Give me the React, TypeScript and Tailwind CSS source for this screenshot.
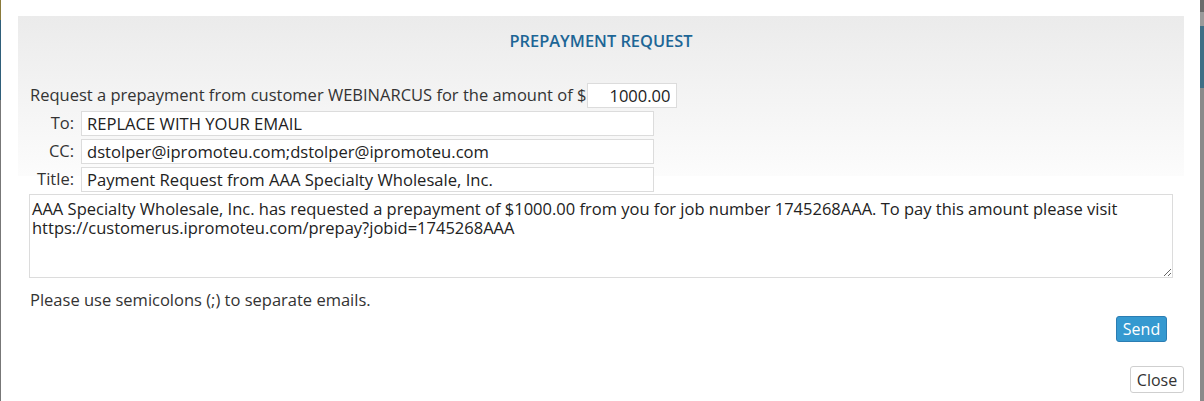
import React from "react";

const font = { fontFamily: '"Open Sans", "Liberation Sans", sans-serif' };

function Field({ label, value }: { label: string; value: string }) {
  return (
    <div className="flex items-center h-[25px]">
      <span className="w-[46px] text-right pr-[1px]">{label}</span>
      <input
        readOnly
        defaultValue={value}
        className="ml-[6px] w-[573px] h-[25px] border border-[#dcdcdc] bg-white px-[5px] text-[16.6px] text-[#222] outline-none"
      />
    </div>
  );
}

export default function App() {
  return (
    <div className="w-[1204px] h-[401px] bg-white flex text-[16.5px] text-[#333] overflow-hidden" style={font}>
      {/* page behind the dialog */}
      <div className="w-[1px] h-full bg-[#777] flex flex-col">
        <div className="h-[20px] bg-[#8a7a3a]" />
        <div className="h-[80px] bg-[#2f5f7a]" />
      </div>

      <div className="flex-1 pl-[17px] pt-[16px]">
        <div className="w-[1166px] bg-[linear-gradient(#ebebeb,#fcfcfc)] bg-no-repeat bg-[length:100%_160px]">
          <h2 className="pt-[15px] text-center text-[16.4px] leading-[20px] font-semibold text-[#1d6696]">
            PREPAYMENT REQUEST
          </h2>

          <div className="mt-[32px] px-[11px] flex flex-col gap-[3px]">
            <div className="flex items-center h-[25px] pl-[1px]">
              <span>Request a prepayment from customer WEBINARCUS for the amount of $</span>
              <input
                readOnly
                defaultValue="1000.00"
                className="ml-[1px] w-[90px] h-[25px] border border-[#dcdcdc] bg-white pr-[6px] text-right text-[16.5px] text-[#222] outline-none"
              />
            </div>
            <Field label="To:" value="REPLACE WITH YOUR EMAIL" />
            <Field label="CC:" value="dstolper@ipromoteu.com;dstolper@ipromoteu.com" />
            <Field label="Title:" value="Payment Request from AAA Specialty Wholesale, Inc." />
            <textarea
              readOnly
              defaultValue="AAA Specialty Wholesale, Inc. has requested a prepayment of $1000.00 from you for job number 1745268AAA. To pay this amount please visit https://customerus.ipromoteu.com/prepay?jobid=1745268AAA"
              className="mt-[-1px] w-[1144px] h-[84px] border border-[#dcdcdc] bg-white px-[2px] pt-[4px] text-[16.5px] leading-[19px] text-[#222] outline-none"
            />
            <p className="mt-[9px] pl-[1px] leading-[20px]">Please use semicolons (;) to separate emails.</p>
            <div className="flex justify-end pr-[6px] mt-[3px]">
              <button className="h-[26px] w-[51px] rounded-[3px] border border-[#2b7db3] bg-[#3599d0] text-white text-[16px] leading-[20px]">
                Send
              </button>
            </div>
          </div>

          <div className="flex justify-end mt-[24px]">
            <button className="h-[27px] w-[54px] rounded-[3px] border border-[#cfcfcf] bg-white text-[#333] text-[16px] leading-[20px]">
              Close
            </button>
          </div>
        </div>
      </div>

      <div className="w-[4px] h-full bg-[#8a8a8a] flex flex-col">
        <div className="h-[12px] bg-[#6b6b6b]" />
        <div className="h-[14px] bg-[#9a9a9a]" />
        <div className="h-[62px] bg-[#3f6f86]" />
      </div>
    </div>
  );
}
